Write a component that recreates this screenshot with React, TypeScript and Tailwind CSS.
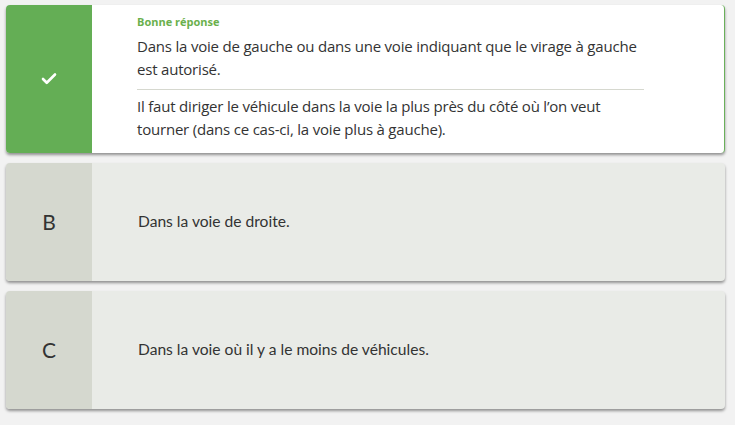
import { Check } from "lucide-react";

interface OptionProps {
  letter: string;
  text: string;
}

export default function App() {
  return (
    <div className="w-[735px] h-[425px] bg-[#f2f2f2] pt-[5px] pl-[6px] pr-[10px] flex flex-col gap-[10px] font-['Lato',sans-serif]">
      {/* Bonne réponse */}
      <div className="flex h-[148px] rounded-[4px] overflow-hidden bg-white border-r border-[#6ab05a] shadow-[0_2px_3px_rgba(0,0,0,0.4)]">
        <div className="w-[86px] shrink-0 bg-[#64ae55] flex items-center justify-center">
          <Check className="w-[18px] h-[18px] text-white" strokeWidth={3.5} />
        </div>
        <div className="flex-1 pl-[45px] pr-[80px] pt-[10px] font-['Open_Sans',sans-serif] text-[#333333]">
          <div className="text-[11px] font-bold text-[#6ab04c] leading-[14px]">Bonne réponse</div>
          <p className="mt-[6px] text-[15px] leading-[23px] tracking-[-0.2px]">
            Dans la voie de gauche ou dans une voie indiquant que le virage à gauche est autorisé.
          </p>
          <div className="mt-[8px] border-t border-[#d6d8cf]" />
          <p className="mt-[5px] text-[15px] leading-[23px] tracking-[-0.2px]">
            Il faut diriger le véhicule dans la voie la plus près du côté où l’on veut tourner (dans ce cas-ci, la voie plus à gauche).
          </p>
        </div>
      </div>

      <Option letter="B" text="Dans la voie de droite." />
      <Option letter="C" text="Dans la voie où il y a le moins de véhicules." />
    </div>
  );
}

function Option({ letter, text }: OptionProps) {
  return (
    <div className="flex h-[118px] rounded-[4px] overflow-hidden bg-[#e9ebe7] shadow-[0_2px_3px_rgba(0,0,0,0.4)]">
      <div className="w-[86px] shrink-0 bg-[#d5d8cf] flex items-center justify-center text-[21px] text-[#333333]">
        {letter}
      </div>
      <div className="flex-1 pl-[46px] flex items-center text-[15.6px] text-[#333333]">
        {text}
      </div>
    </div>
  );
}
